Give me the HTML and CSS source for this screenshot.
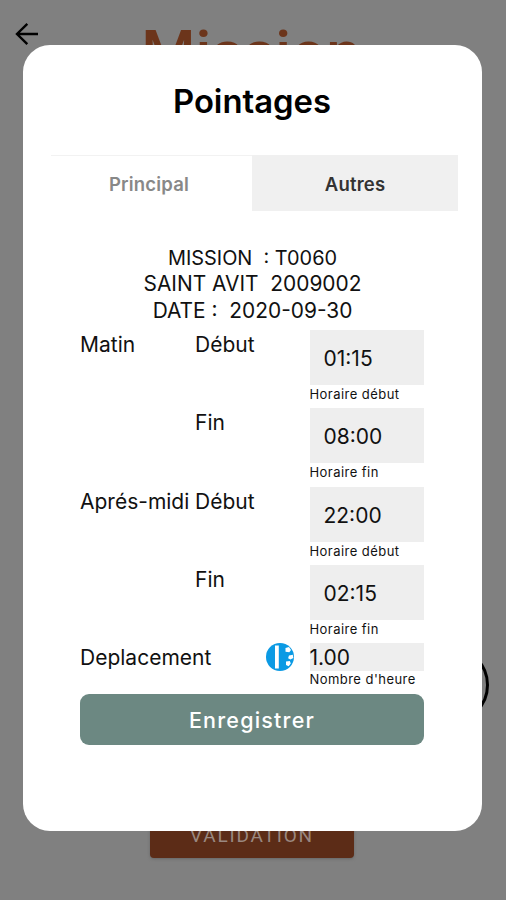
FILE: index.html
```html
<!DOCTYPE html>
<html lang="fr">
<head>
<meta charset="utf-8">
<title>Pointages</title>
<link rel="stylesheet" href="styles.css">
</head>

<body>

<div class="page">
  <header>
    <svg class="back" viewBox="0 0 24 24"><path d="M12.3 1.8 L2 12 L12.3 22.2 M2.5 12 H23"/></svg>
    <h1>Mission</h1>
  </header>
  <div class="ring"></div>
  <button class="validation">VALIDATION</button>
</div>

<div class="modal">
  <h2>Pointages</h2>

  <nav class="tabs">
    <a class="tab active">Principal</a>
    <a class="tab">Autres</a>
  </nav>

  <div class="infos">
    <p class="mission">MISSION&nbsp; : T0060</p>
    <p>SAINT AVIT&nbsp; 2009002</p>
    <p>DATE :&nbsp; 2020-09-30</p>
  </div>

  <form>
    <div class="row">
      <span>Matin</span>
      <span>Début</span>
      <label><b class="field">01:15</b><small>Horaire début</small></label>
    </div>
    <div class="row">
      <span></span>
      <span>Fin</span>
      <label><b class="field">08:00</b><small>Horaire fin</small></label>
    </div>
    <div class="row">
      <span>Aprés-midi</span>
      <span>Début</span>
      <label><b class="field">22:00</b><small>Horaire début</small></label>
    </div>
    <div class="row">
      <span></span>
      <span>Fin</span>
      <label><b class="field">02:15</b><small>Horaire fin</small></label>
    </div>
    <div class="row last">
      <span class="wide">Deplacement
        <svg class="toggle" viewBox="0 0 28 28">
          <circle cx="14" cy="14" r="14" fill="#0b9ae4"/>
          <g fill="#fff">
            <path d="M9 2.5h3.8v23H9z"/>
            <path d="M19.5 5l3.5-1 2 3-1.7 2.3-3.8-.5z"/>
            <path d="M23 12.6l3.8-.8.6 3.3-3 1.5-2.3-1.4z"/>
            <path d="M20 18.5l3.8-.5 1 2.5-2.2 2.7-2.6-1.2z"/>
          </g>
        </svg>
      </span>
      <label><b class="field">1.00</b><small>Nombre d'heure</small></label>
    </div>
    <button type="button" class="save">Enregistrer</button>
  </form>
</div>

</body>
</html>
```
FILE: styles.css
```css
* { box-sizing: border-box; }

body {
  margin: 0;
  height: 900px;
  position: relative;
  overflow: hidden;
  background: #808080;
  color: #111;
  font-family: Inter, sans-serif;
}

h1, h2, p { margin: 0; font-weight: normal; }

button { border: 0; padding: 0; }

.page {
  height: 900px;
  display: flex;
  flex-direction: column;
  align-items: center;
}

header {
  width: 100%;
  height: 90px;
  padding: 22px 0 0 15px;
  display: flex;
}

.back {
  width: 24px;
  height: 24px;
  fill: none;
  stroke: #000;
  stroke-width: 2.4;
}

h1 {
  flex: 1;
  padding-right: 43px;
  text-align: center;
  color: #6c351b;
  font: 500 62px/62px Roboto, sans-serif;
}

.ring {
  width: 78px;
  height: 78px;
  margin: 556px 17px 0 0;
  align-self: flex-end;
  border: 3px solid #000;
  border-radius: 50%;
}

.validation {
  width: 204px;
  height: 49px;
  margin: 85px 2px 0 0;
  border-radius: 4px;
  background: #5c2c17;
  box-shadow: 0 1px 3px #666;
  color: #9a8880;
  font: 400 19px/53px Roboto, sans-serif;
  letter-spacing: 1.8px;
}

.modal {
  position: absolute;
  left: 23px;
  top: 45px;
  width: 459px;
  height: 786px;
  padding: 36px 24px 0 28px;
  border-radius: 27px;
  background: #fff;
}

h2 {
  padding-right: 5px;
  text-align: center;
  color: #000;
  font-size: 32.8px;
  font-weight: 600;
  line-height: 40px;
}

.tabs {
  display: flex;
  height: 56px;
  margin-top: 34.4px;
}

.tab {
  width: 206px;
  background: #f0f0f0;
  text-align: center;
  color: #333;
  font-size: 18.5px;
  font-weight: 600;
  line-height: 58px;
  letter-spacing: 0.2px;
}

.tab.active {
  width: 201px;
  padding-right: 5px;
  border-top: 1px solid #f2f2f2;
  background: #fff;
  color: #888;
  line-height: 56px;
}

.infos {
  padding: 33.6px 4px 0 0;
  text-align: center;
  font-size: 20.9px;
  line-height: 26.5px;
}

.mission { font-size: 19.9px; }

form {
  width: 344px;
  margin: 5.5px 0 0 29px;
}

.row {
  display: grid;
  grid-template-columns: 115px 114.5px 114.5px;
  height: 78.3px;
  font-size: 21px;
  line-height: 29px;
  white-space: nowrap;
}

.field {
  display: block;
  height: 55px;
  padding-left: 14px;
  background: #eee;
  font-weight: normal;
  line-height: 57px;
}

small {
  display: block;
  font-size: 13px;
  line-height: 19px;
  letter-spacing: 0.45px;
}

.row.last { height: 50.7px; }

.row.last .field {
  height: 28px;
  padding: 0;
  line-height: 29px;
}

.row.last small { line-height: 17px; }

.wide {
  grid-column: 1 / 3;
  display: flex;
  justify-content: space-between;
  padding-right: 15.5px;
}

.toggle {
  width: 28px;
  height: 28px;
}

.save {
  display: block;
  width: 344px;
  height: 51px;
  border-radius: 9px;
  background: #6c8882;
  color: #fff;
  font: 500 21.5px/52px Inter, sans-serif;
  letter-spacing: 1.2px;
}
```
